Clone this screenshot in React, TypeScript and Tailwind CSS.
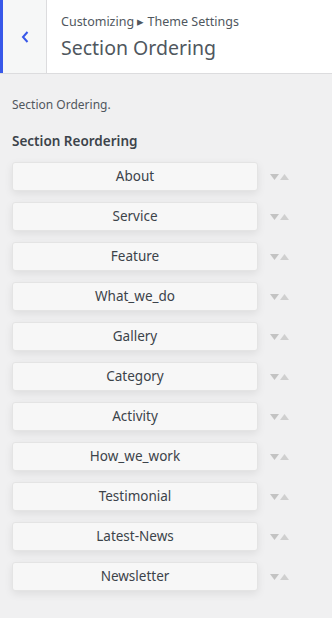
const sections = [
  "About",
  "Service",
  "Feature",
  "What_we_do",
  "Gallery",
  "Category",
  "Activity",
  "How_we_work",
  "Testimonial",
  "Latest-News",
  "Newsletter",
];

const Arrows = () => (
  <svg width="19" height="8" viewBox="0 0 19 8" className="shrink-0">
    <polygon points="0,1 9,1 4.5,7" fill="#c3c3c3" />
    <polygon points="10,7 19,7 14.5,1" fill="#cfcfcf" />
  </svg>
);

export default function App() {
  return (
    <div
      className="flex h-[618px] w-[332px] flex-col bg-[#f0f0f1] text-[#50575e]"
      style={{ fontFamily: '"Noto Sans", "Open Sans", sans-serif' }}
    >
      <div className="flex h-[74px] shrink-0 border-b border-[#dcdcde] bg-white">
        <button className="flex w-[47px] shrink-0 items-center justify-center border-l-[3px] border-r border-l-[#3858e9] border-r-[#dcdcde] bg-[#f6f7f7] text-[#3858e9]">
          <svg width="10" height="14" viewBox="0 0 10 14" fill="none">
            <path d="M7.5 2 L3 7 L7.5 12" stroke="currentColor" strokeWidth="2" />
          </svg>
        </button>
        <div className="flex flex-col justify-center pl-[14px]">
          <span className="text-[12.5px] leading-[16px] text-[#50575e]">
            Customizing ▸ Theme Settings
          </span>
          <h1 className="mt-[6px] text-[19.5px] leading-[24px] text-[#50575e]">
            Section Ordering
          </h1>
        </div>
      </div>

      <div className="px-[12px] pt-[23px]">
        <p className="text-[12px] leading-[16px]">Section Ordering.</p>
        <h2 className="mt-[19px] text-[13.5px] font-semibold leading-[18px] text-[#3c434a]">
          Section Reordering
        </h2>
        <ul className="mt-[12px] flex flex-col gap-[11px]">
          {sections.map((s) => (
            <li key={s} className="flex items-center gap-[12px]">
              <div className="flex h-[29px] w-[246px] items-center justify-center rounded-[3px] border border-[#e4e4e4] bg-[#f7f7f7] text-[13.5px] text-[#3c434a] shadow-[0_3px_8px_rgba(0,0,0,0.08)]">
                {s}
              </div>
              <Arrows />
            </li>
          ))}
        </ul>
      </div>
    </div>
  );
}
